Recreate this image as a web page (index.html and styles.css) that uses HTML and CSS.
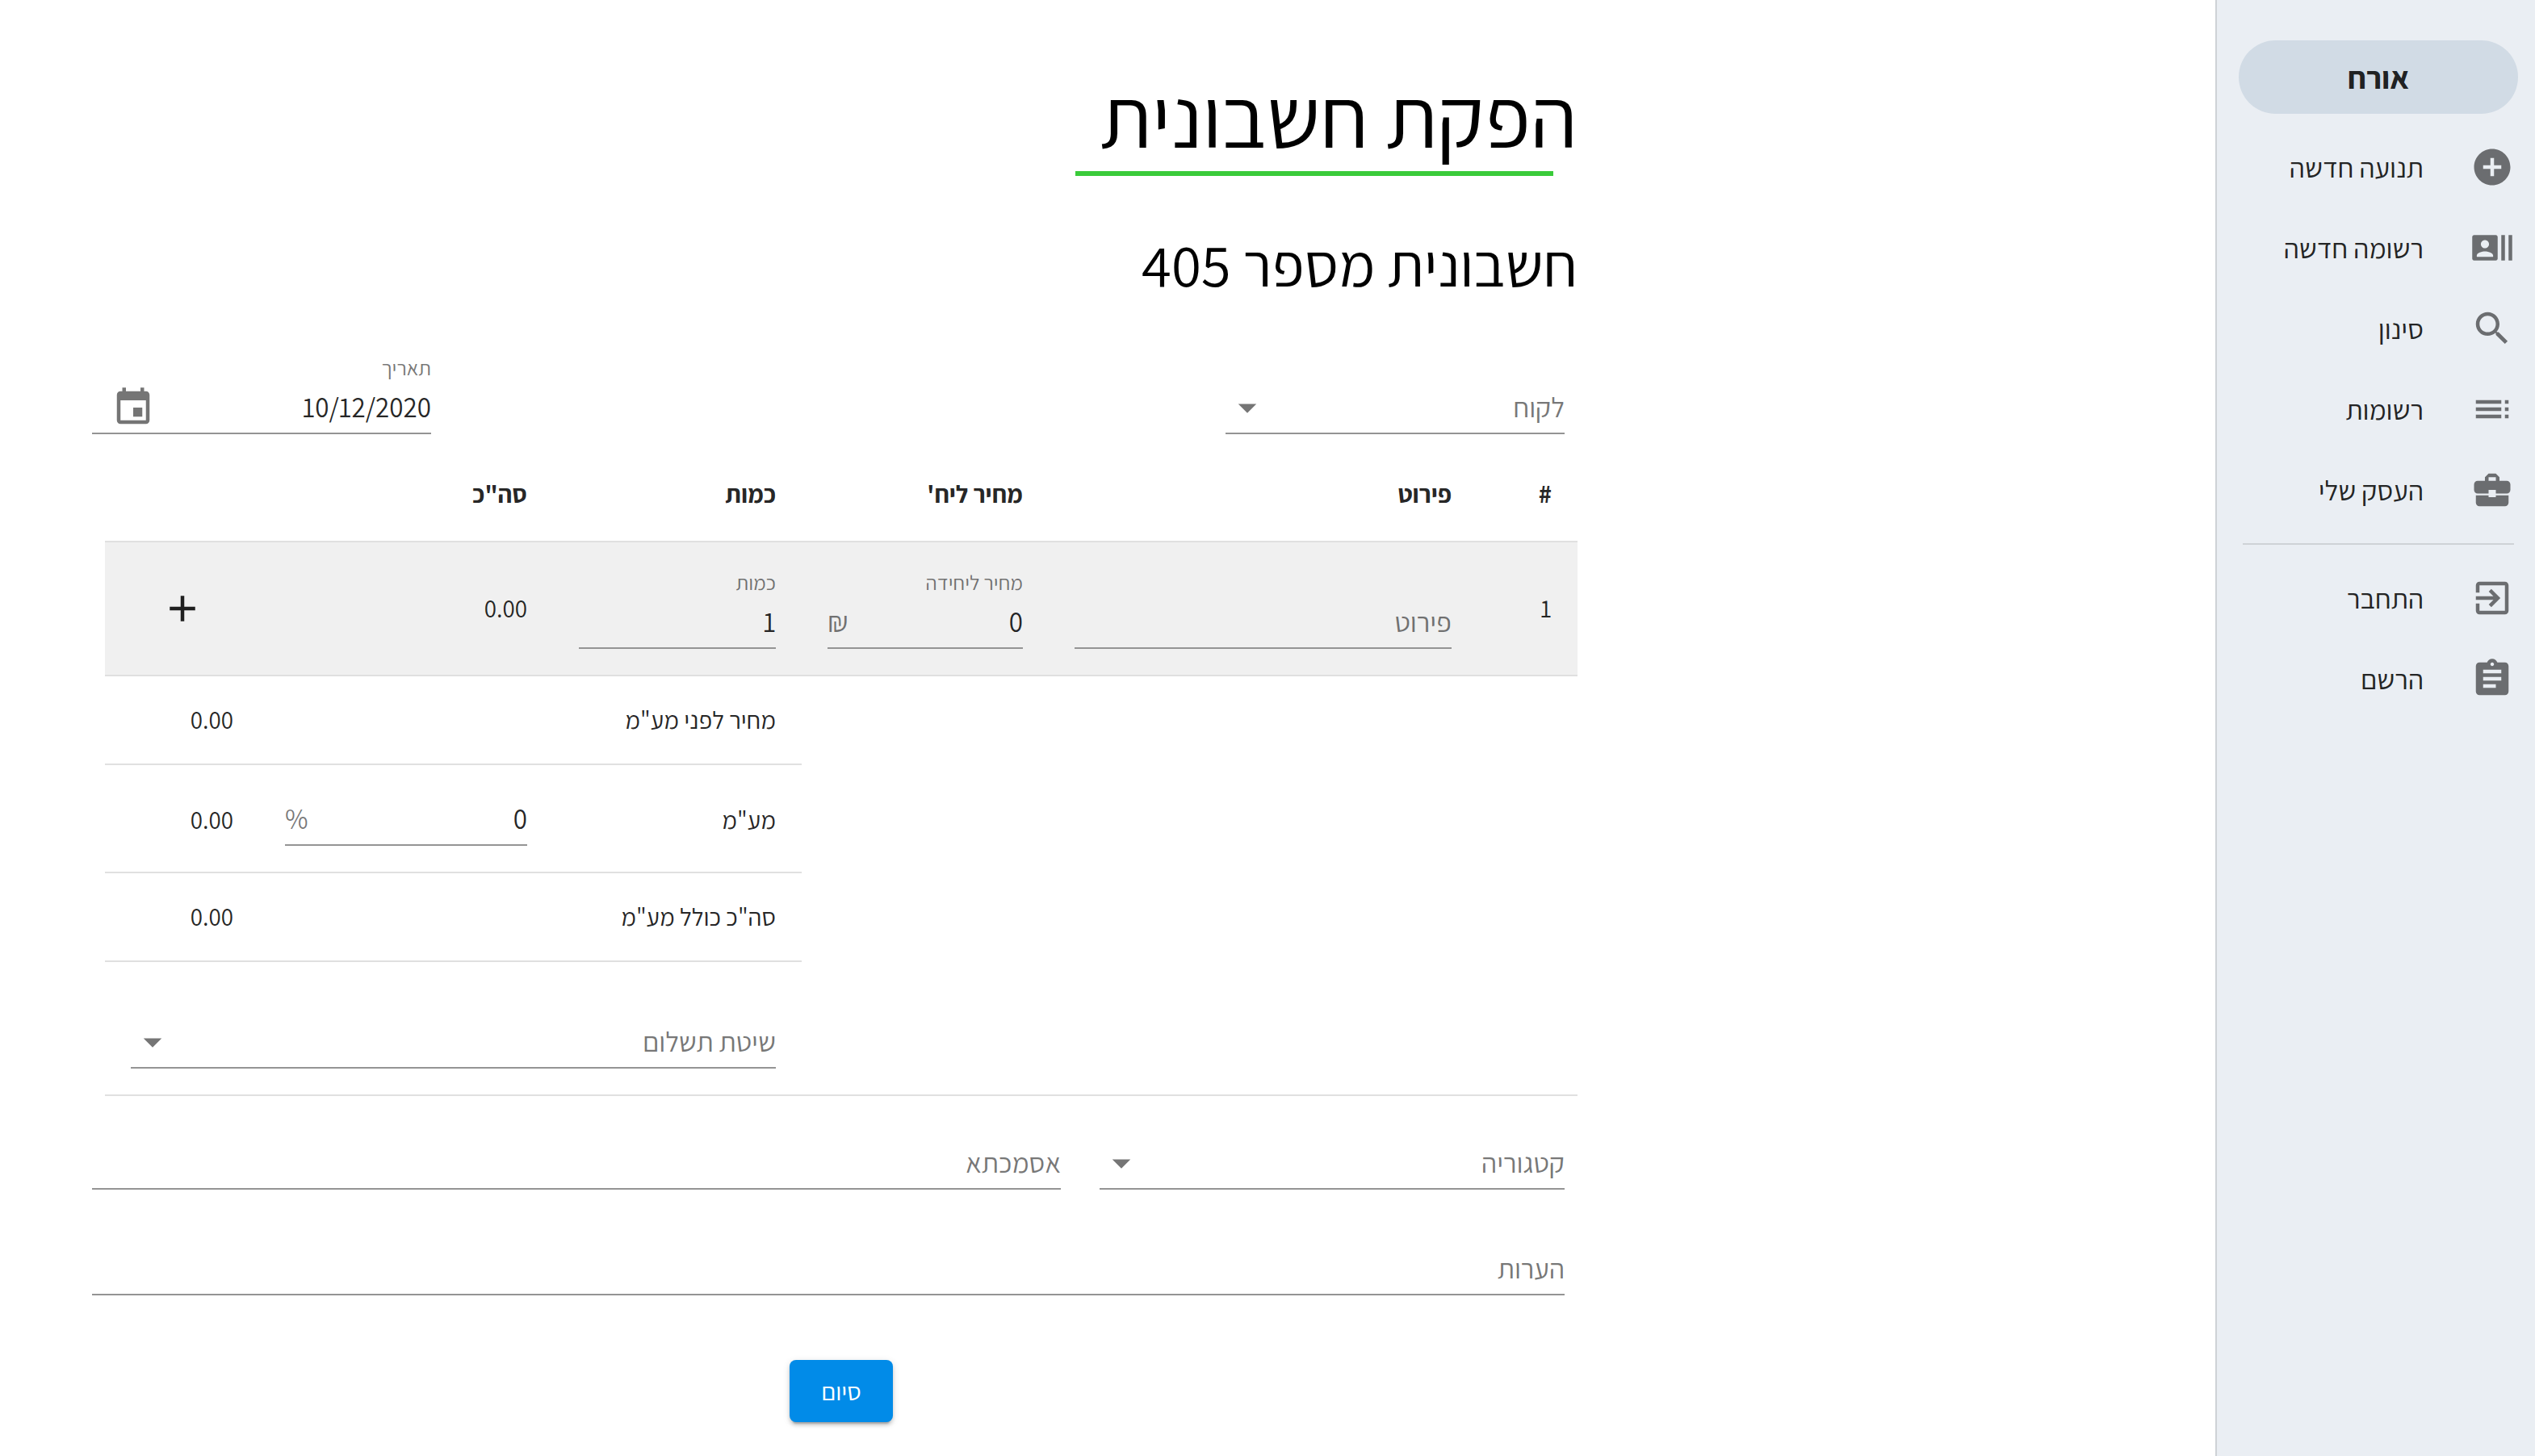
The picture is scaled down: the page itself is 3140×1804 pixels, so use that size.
FILE: index.html
```html
<!DOCTYPE html>
<html lang="he" dir="rtl">
<head>
  <meta charset="utf-8">
  <meta name="viewport" content="width=device-width, initial-scale=1">
  <title>הפקת חשבונית</title>
  <link rel="stylesheet" href="styles.css">
</head>
<body>
  <div class="layout">
    <aside class="sidebar">
      <button class="account" type="button">אורח</button>
      <nav class="nav">
        <a class="nav-item" href="#">
          <svg class="icon" viewBox="0 0 24 24" aria-hidden="true"><path d="M12 2C6.48 2 2 6.48 2 12s4.48 10 10 10 10-4.480 10-10S17.520 2 12 2zm5 11h-4v4h-2v-4H7v-2h4V7h2v4h4v2z"/></svg>
          <span>תנועה חדשה</span>
        </a>
        <a class="nav-item" href="#">
          <svg class="icon" viewBox="0 0 24 24" aria-hidden="true"><path d="M21 5v14h2V5h-2zm-4 14h2V5h-2v14zM14 5H2c-.55 0-1 .45-1 1v12c0 .55.45 1 1 1h12c.55 0 1-.45 1-1V6c0-.55-.45-1-1-1zM8 7.750c1.240 0 2.250 1.010 2.250 2.250S9.240 12.250 8 12.250 5.750 11.240 5.750 10 6.760 7.750 8 7.750zM12.500 17h-9v-.75c0-1.500 3-2.250 4.500-2.250s4.500.75 4.500 2.250V17z"/></svg>
          <span>רשומה חדשה</span>
        </a>
        <a class="nav-item" href="#">
          <svg class="icon" viewBox="0 0 24 24" aria-hidden="true"><path d="M15.500 14h-.79l-.28-.27C15.410 12.590 16 11.110 16 9.500 16 5.910 13.090 3 9.500 3S3 5.910 3 9.500 5.910 16 9.500 16c1.610 0 3.090-.59 4.230-1.570l.27.28v.79l5 4.990L20.490 19l-4.990-5zm-6 0C7.010 14 5 11.990 5 9.500S7.010 5 9.500 5 14 7.010 14 9.500 11.990 14 9.500 14z"/></svg>
          <span>סינון</span>
        </a>
        <a class="nav-item" href="#">
          <svg class="icon" viewBox="0 0 24 24" aria-hidden="true"><path d="M3 9h14V7H3v2zm0 4h14v-2H3v2zm0 4h14v-2H3v2zm16 0h2v-2h-2v2zm0-10v2h2V7h-2zm0 6h2v-2h-2v2z"/></svg>
          <span>רשומות</span>
        </a>
        <a class="nav-item" href="#">
          <svg class="icon" viewBox="0 0 24 24" aria-hidden="true"><path d="M10 16v-1H3.010L3 19c0 1.110.89 2 2 2h14c1.110 0 2-.89 2-2v-4h-7v1h-4zm10-9h-4.010V5l-2-2h-4l-2 2v2H4c-1.100 0-2 .9-2 2v3c0 1.110.89 2 2 2h6v-2h4v2h6c1.100 0 2-.9 2-2V9c0-1.100-.9-2-2-2zm-6 0h-4V5h4v2z"/></svg>
          <span>העסק שלי</span>
        </a>
        <hr class="nav-divider">
        <a class="nav-item" href="#">
          <svg class="icon" viewBox="0 0 24 24" aria-hidden="true"><path d="M10.090 15.590L11.500 17l5-5-5-5-1.410 1.410L12.670 11H3v2h9.670l-2.580 2.590zM19 3H5c-1.110 0-2 .9-2 2v4h2V5h14v14H5v-4H3v4c0 1.100.89 2 2 2h14c1.100 0 2-.9 2-2V5c0-1.100-.9-2-2-2z"/></svg>
          <span>התחבר</span>
        </a>
        <a class="nav-item" href="#">
          <svg class="icon" viewBox="0 0 24 24" aria-hidden="true"><path d="M19 3h-4.180C14.400 1.840 13.300 1 12 1c-1.300 0-2.400.84-2.820 2H5c-1.100 0-2 .9-2 2v14c0 1.100.9 2 2 2h14c1.100 0 2-.9 2-2V5c0-1.100-.9-2-2-2zm-7 0c.55 0 1 .45 1 1s-.45 1-1 1-1-.45-1-1 .45-1 1-1zm2 14H7v-2h7v2zm3-4H7v-2h10v2zm0-4H7V7h10v2z"/></svg>
          <span>הרשם</span>
        </a>
      </nav>
    </aside>

    <main class="main">
      <form class="invoice">
        <h1 class="title">הפקת חשבונית</h1>
        <h2 class="subtitle">חשבונית מספר 405</h2>

        <div class="field-row field-row-top">
          <div class="field field-short">
            <div class="control">
              <select class="input" aria-label="לקוח"><option>לקוח</option></select>
              <svg class="icon" viewBox="0 0 24 24" aria-hidden="true"><path d="M7 10l5 5 5-5z"/></svg>
            </div>
          </div>
          <div class="field field-short">
            <label class="label" for="date">תאריך</label>
            <div class="control control-date">
              <input class="input" id="date" type="text" value="10/12/2020">
              <button class="icon-button" type="button" aria-label="בחירת תאריך">
                <svg class="icon" viewBox="0 0 24 24" aria-hidden="true"><path d="M17 12h-5v5h5v-5zM16 1v2H8V1H6v2H5c-1.110 0-1.990.9-1.990 2L3 19c0 1.100.89 2 2 2h14c1.100 0 2-.9 2-2V5c0-1.100-.9-2-2-2h-1V1h-2zm3 18H5V8h14v11z"/></svg>
              </button>
            </div>
          </div>
        </div>

        <table class="items">
          <colgroup>
            <col class="col-number"><col><col class="col-price"><col class="col-quantity"><col class="col-total"><col class="col-action">
          </colgroup>
          <thead>
            <tr>
              <th scope="col">#</th>
              <th scope="col">פירוט</th>
              <th scope="col">מחיר ליח'</th>
              <th scope="col">כמות</th>
              <th scope="col">סה"כ</th>
              <td></td>
            </tr>
          </thead>
          <tbody>
            <tr class="item-row">
              <td>1</td>
              <td>
                <div class="field field-tall">
                  <div class="control"><input class="input" type="text" placeholder="פירוט" aria-label="פירוט"></div>
                </div>
              </td>
              <td>
                <div class="field">
                  <label class="label" for="price">מחיר ליחידה</label>
                  <div class="control"><input class="input" id="price" type="text" value="0"><span class="unit">₪</span></div>
                </div>
              </td>
              <td>
                <div class="field">
                  <label class="label" for="quantity">כמות</label>
                  <div class="control"><input class="input" id="quantity" type="text" value="1"></div>
                </div>
              </td>
              <td>0.00</td>
              <td class="action-cell">
                <button class="icon-button add" type="button" aria-label="הוספת שורה">
                  <svg class="icon" viewBox="0 0 24 24" aria-hidden="true"><path d="M19 13h-6v6h-2v-6H5v-2h6V5h2v6h6v2z"/></svg>
                </button>
              </td>
            </tr>
            <tr class="sum-row">
              <td class="blank" colspan="3" rowspan="3"></td>
              <td colspan="2">מחיר לפני מע"מ</td>
              <td>0.00</td>
            </tr>
            <tr class="vat-row">
              <td><label for="vat">מע"מ</label></td>
              <td>
                <div class="field">
                  <div class="control"><input class="input" id="vat" type="text" value="0"><span class="unit">%</span></div>
                </div>
              </td>
              <td>0.00</td>
            </tr>
            <tr class="sum-row">
              <td colspan="2">סה"כ כולל מע"מ</td>
              <td>0.00</td>
            </tr>
            <tr>
              <td colspan="3"></td>
              <td colspan="3">
                <div class="field field-tall">
                  <div class="control">
                    <select class="input" aria-label="שיטת תשלום"><option>שיטת תשלום</option></select>
                    <svg class="icon" viewBox="0 0 24 24" aria-hidden="true"><path d="M7 10l5 5 5-5z"/></svg>
                  </div>
                </div>
              </td>
            </tr>
          </tbody>
        </table>

        <div class="field-row field-row-split">
          <div class="field">
            <div class="control">
              <select class="input" aria-label="קטגוריה"><option>קטגוריה</option></select>
              <svg class="icon" viewBox="0 0 24 24" aria-hidden="true"><path d="M7 10l5 5 5-5z"/></svg>
            </div>
          </div>
          <div class="field">
            <div class="control"><input class="input" type="text" placeholder="אסמכתא" aria-label="אסמכתא"></div>
          </div>
        </div>
        <div class="field-row field-row-notes">
          <div class="field">
            <div class="control"><input class="input" type="text" placeholder="הערות" aria-label="הערות"></div>
          </div>
        </div>

        <div class="actions">
          <button class="submit" type="submit">סיום</button>
        </div>
      </form>
    </main>
  </div>
</body>
</html>
```
FILE: styles.css
```css
:root {
  --text: rgba(0, 0, 0, 0.87);
  --muted: rgba(0, 0, 0, 0.54);
  --field-line: #949494;
  --cell-line: #e0e0e0;
}

* {
  box-sizing: border-box;
}

body {
  margin: 0;
  background: #fff;
  color: var(--text);
  font-family: "Assistant", "Open Sans", sans-serif;
  font-size: 35px;
  line-height: 48px;
}

.layout {
  display: flex;
  min-height: 100vh;
}

.icon {
  display: block;
  flex: none;
  width: 54px;
  height: 54px;
  fill: var(--muted);
}

/* Sidebar */

.sidebar {
  flex: none;
  width: 396px;
  padding: 50px 21px 50px 27px;
  background: #eaeef3;
  border-left: 2px solid #ced2d6;
}

.account {
  display: block;
  width: 100%;
  height: 91px;
  margin-bottom: 16px;
  border: 0;
  border-radius: 46px;
  background: #d1dbe5;
  color: var(--text);
  font: inherit;
  font-size: 39px;
  font-weight: 700;
}

.nav-item {
  display: flex;
  align-items: center;
  gap: 58px;
  height: 100px;
  padding-right: 5px;
  color: var(--text);
  text-decoration: none;
}

.nav-divider {
  height: 2px;
  margin: 16px 5px;
  border: 0;
  background: #ced2d6;
}

/* Invoice form */

.main {
  flex: 1;
  display: grid;
  grid-template-columns: 790fr 1856fr 98fr;
}

.invoice {
  grid-column: 2;
  padding: 76px 0 40px;
}

.title {
  position: relative;
  width: fit-content;
  margin: 0;
  color: #000;
  font-size: 106px;
  font-weight: 400;
  line-height: 136px;
}

.title::after {
  content: "";
  position: absolute;
  right: 30px;
  bottom: -6px;
  width: 100%;
  height: 6px;
  background: #3acb3a;
}

.subtitle {
  margin: 56px 0 0;
  color: #000;
  font-size: 75px;
  font-weight: 400;
  line-height: 120px;
}

/* Fields */

.field-row {
  display: grid;
  padding: 0 16px;
}

.field-row-top {
  display: flex;
  justify-content: space-between;
  align-items: flex-end;
  margin-top: 50px;
}

.field-row-split {
  grid-template-columns: 576fr 1200fr;
  gap: 48px;
  margin-top: 52px;
}

.field-row-notes {
  margin-top: 67px;
}

.field {
  display: flex;
  flex-direction: column;
  justify-content: flex-end;
}

.field-short {
  width: 420px;
}

.field-tall {
  min-height: 100px;
}

.label {
  padding-bottom: 2px;
  color: var(--muted);
  font-size: 26px;
  line-height: 34px;
}

.control {
  display: flex;
  align-items: center;
  height: 64px;
  border-bottom: 2px solid var(--field-line);
}

.control-date {
  padding-left: 24px;
}

.input,
.unit {
  height: 60px;
  padding: 0 0 2px;
  line-height: 58px;
}

.input {
  flex: 1;
  min-width: 0;
  border: 0;
  outline: 0;
  background: none;
  color: var(--text);
  font: inherit;
  text-align: right;
  appearance: none;
}

select.input,
.input::placeholder,
.unit {
  color: var(--muted);
  opacity: 1;
}

.icon-button {
  display: block;
  padding: 0;
  border: 0;
  background: none;
}

/* Items table */

.items {
  width: calc(100% - 32px);
  margin: 16px 0 0 32px;
  border-spacing: 0;
  table-layout: fixed;
  font-size: 31px;
}

.items .control {
  font-size: 35px;
}

.col-number { width: 124px; }
.col-price { width: 306px; }
.col-quantity { width: 308px; }
.col-total { width: 364px; }
.col-action { width: 191px; }

.items th,
.items td {
  padding: 32px;
  border-bottom: 2px solid var(--cell-line);
  text-align: right;
  font-weight: 400;
}

.items th {
  height: 118px;
  font-weight: 700;
}

.items .item-row td {
  background: #f0f0f0;
}

.items .sum-row td {
  height: 110px;
  padding: 0 32px;
}

.items .vat-row td {
  padding: 36px 32px 32px;
}

.items .blank {
  border: 0;
}

.items .action-cell {
  padding: 0;
}

.add {
  margin: 0 auto;
}

.add .icon {
  fill: var(--text);
}

.actions {
  display: flex;
  justify-content: center;
  padding-left: 32px;
  margin-top: 80px;
}

.submit {
  width: 128px;
  height: 77px;
  border: 0;
  border-radius: 8px;
  background: #018be8;
  box-shadow: 0 6px 2px -4px rgba(0, 0, 0, 0.2), 0 4px 4px rgba(0, 0, 0, 0.14), 0 2px 10px rgba(0, 0, 0, 0.12);
  color: #fff;
  font: inherit;
  font-size: 31px;
}
```
